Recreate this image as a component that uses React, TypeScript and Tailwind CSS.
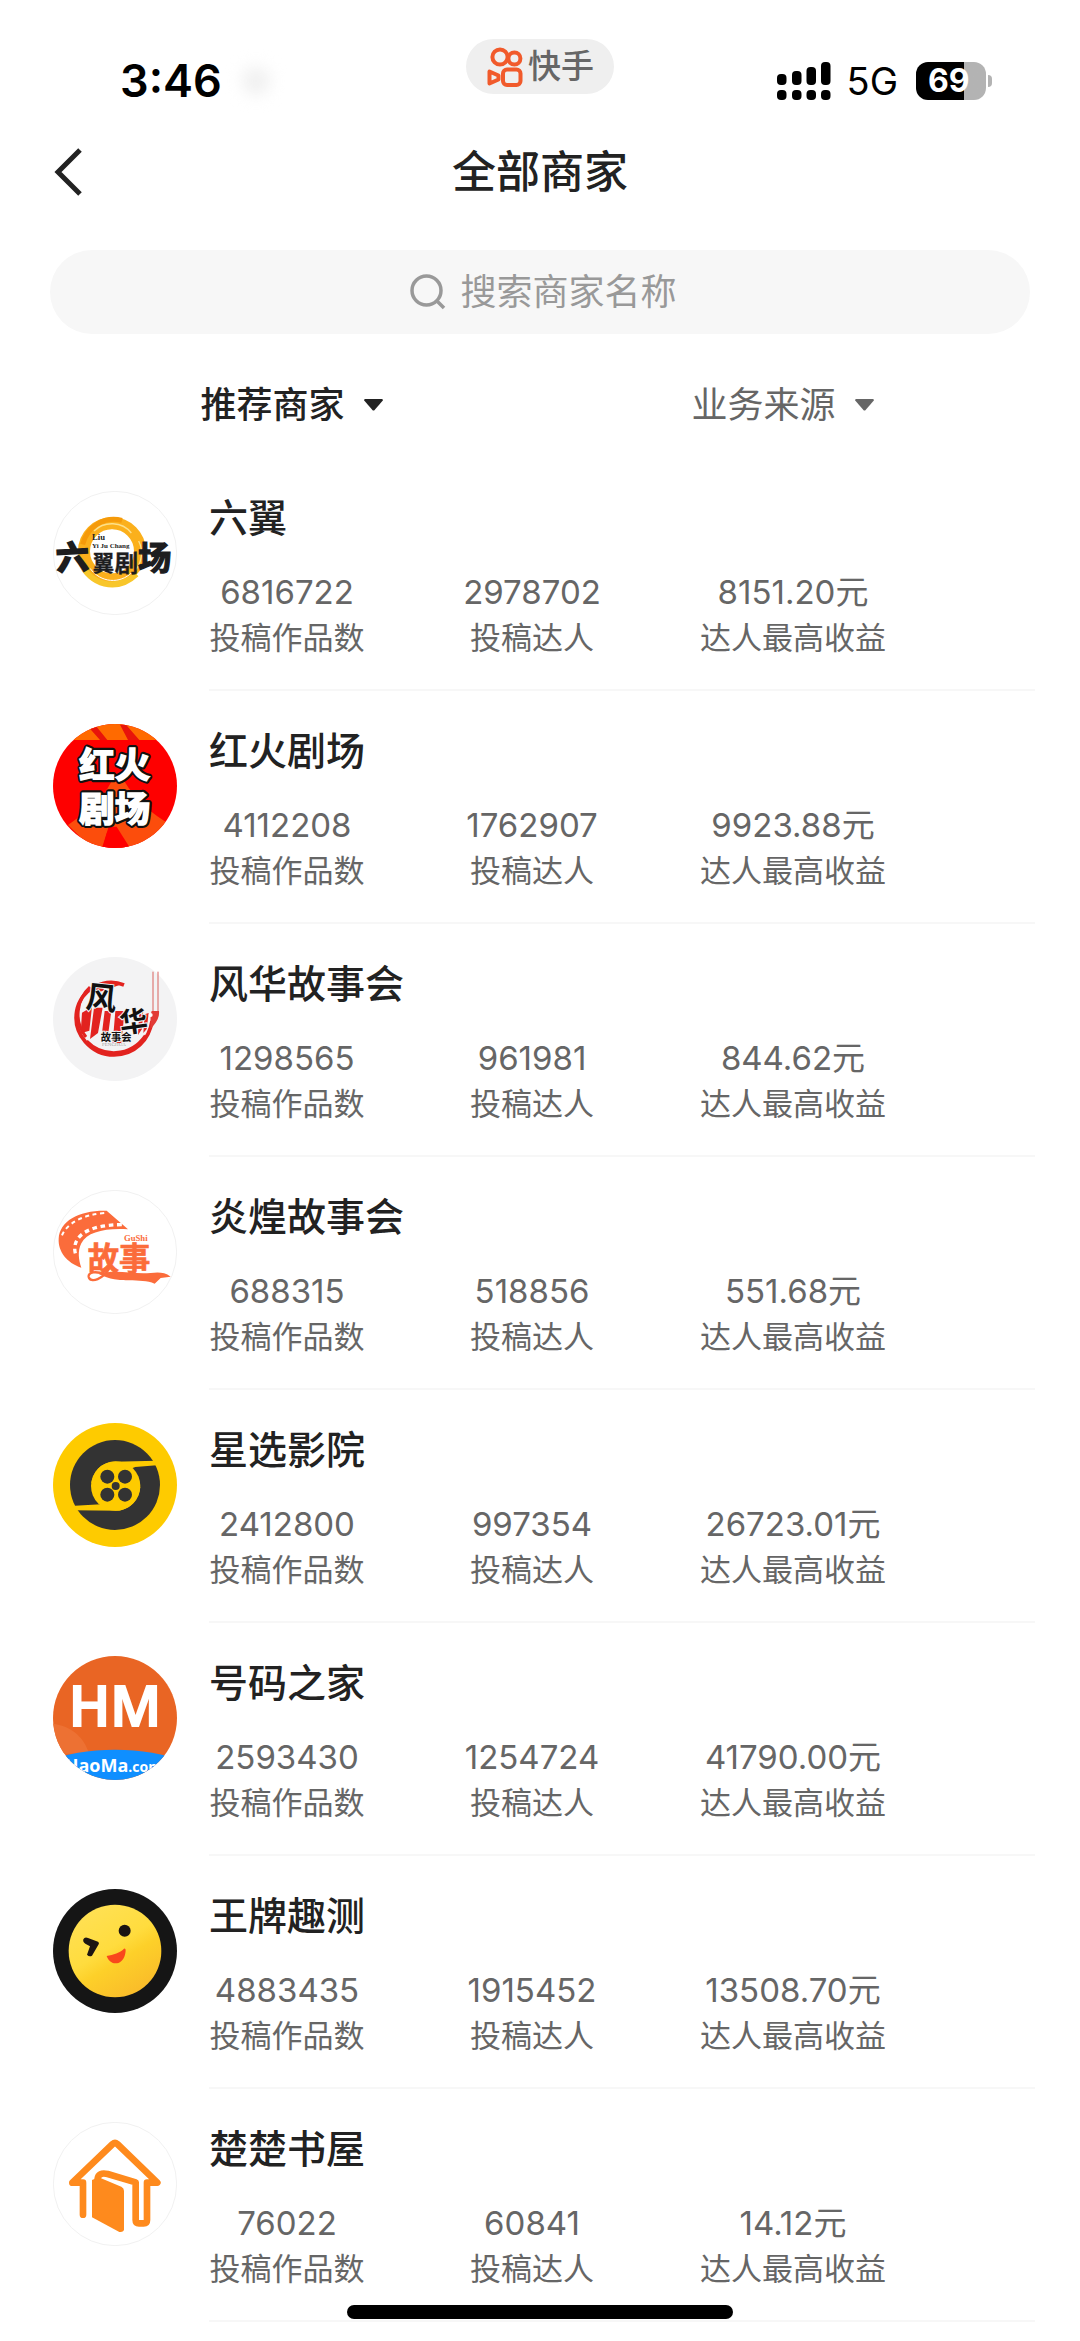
import type { ReactNode } from 'react'

interface Merchant {
  name: string
  works: string
  creators: string
  income: string
  logo: ReactNode
}

const CJK = "Inter, 'Noto Sans CJK SC', sans-serif"

function LiuYiLogo() {
  return (
    <svg viewBox="39 30 372 372" className="size-full" fontFamily={CJK}>
      <circle cx="225" cy="216" r="185" fill="#fff" stroke="#f1f1f1" strokeWidth="3" />
      <circle cx="216" cy="211" r="84" fill="none" stroke="#fbb01c" strokeWidth="36" />
      <path d="M128 190c14-54 66-86 118-72" fill="none" stroke="#f59a0a" strokeWidth="15" />
      <path d="M124 245c24 66 106 90 165 34" fill="none" stroke="#f8c62a" strokeWidth="18" />
      <path d="M150 262c32 44 90 48 126 12" fill="none" stroke="#fff" strokeWidth="3" />
      <path d="M162 150c30-30 84-30 112 6M296 180c16 32 8 66-10 88" fill="none" stroke="#fde08a" strokeWidth="4" />
      <circle cx="216" cy="206" r="60" fill="#fff" />
      <g fontFamily="'Liberation Serif', serif" fontWeight="700" fill="#222">
        <text x="156" y="178" fontSize="26">Liu</text>
        <text x="156" y="202" fontSize="21">Yi Ju Chang</text>
      </g>
      <g fontWeight="700" fill="#1d1d1f" stroke="#1d1d1f">
        <text x="48" y="265" fontSize="98" strokeWidth="6" transform="rotate(-3 90 230)">六</text>
        <text x="158" y="271" fontSize="64" strokeWidth="1">翼</text>
        <text x="224" y="273" fontSize="70" strokeWidth="1">剧</text>
        <text x="294" y="268" fontSize="100" strokeWidth="4">场</text>
      </g>
    </svg>
  )
}

function HongHuoLogo() {
  return (
    <svg viewBox="39 42 372 372" className="size-full" fontFamily={CJK}>
      <clipPath id="honghuo">
        <circle cx="225" cy="228" r="186" />
      </clipPath>
      <g clipPath="url(#honghuo)">
        <path fill="#fe0000" d="M39 42h372v372H39z" />
        <path fill="#ff6a00" d="M39 42h372v48H39z" />
        <path fill="#e8140a" d="M168 48l34 42h-22l-30-34zM258 44l40 46h-34l-24-46z" />
        <path fill="#fc4d0c" d="M214 215c-30 60-76 90-130 130l70 69h34l14-50 22 50h70l100-70c-60-30-110-80-140-129z" />
        <path fill="#fe0000" d="M206 350l-20 64h84l-40-64z" />
      </g>
      <g fontSize="106" fontWeight="700" fill="#fff" stroke="#111" strokeWidth="18" strokeLinejoin="round" paintOrder="stroke">
        <text x="118" y="203">红火</text>
        <text x="118" y="337">剧场</text>
      </g>
      <g fontSize="106" fontWeight="700" fill="#fff" stroke="#fff" strokeWidth="5">
        <text x="118" y="203">红火</text>
        <text x="118" y="337">剧场</text>
      </g>
    </svg>
  )
}

function FengHuaLogo() {
  return (
    <svg viewBox="39 38 372 372" className="size-full" fontFamily={CJK}>
      <circle cx="225" cy="224" r="186" fill="#f3f3f4" />
      <path d="M252 122c-60-24-130 14-142 78-12 70 44 132 112 132 62 0 106-46 114-102" fill="none" stroke="#e2231f" strokeWidth="11" />
      <path d="M150 128c-40 36-50 104-12 150M140 290c46 48 130 50 176-16" fill="none" stroke="#e2231f" strokeWidth="9" />
      <path fill="#e2231f" d="M150 128l80-16 20 6-70 24zM126 205l30-18-8 72-26 8zM162 190h26l-14 76-24 18zM194 200h20l-12 88-18-6zM226 200h28l-10 96h-26zM298 200l12-6-4 60-12 18zM314 210l12-4-6 48-10 12z" />
      <path d="M339 82v118M354 82v118" fill="none" stroke="#d9625f" strokeWidth="3" />
      <path fill="#e23b36" d="M335 200h22c2 20-8 36-26 54 2-20-2-34 4-54z" />
      <circle cx="332" cy="212" r="6" fill="#fff" />
      <g fontWeight="700" fill="#111" stroke="#f3f3f4" strokeWidth="6" paintOrder="stroke">
        <text x="138" y="194" fontSize="92" transform="rotate(6 180 160)">风</text>
        <text x="238" y="262" fontSize="84" transform="rotate(-8 280 230)">华</text>
        <text x="182" y="290" fontSize="31">故事会</text>
      </g>
      <text x="186" y="306" fontSize="15" fill="#999" fontFamily="'Liberation Serif', serif">FENGHUA</text>
    </svg>
  )
}

function GuShiLogo() {
  return (
    <svg viewBox="39 34 372 372" className="size-full" fontFamily={CJK}>
      <circle cx="225" cy="220" r="185" fill="#fff" stroke="#f1f1f1" strokeWidth="3" />
      <path
        fill="#fb6c3b"
        d="M124 267C80 252 54 218 56 180c3-54 62-86 144-84l64 56c-70-4-122 8-140 42-12 24-8 50 0 73z"
      />
      <path d="M66 170c14-34 60-62 128-67" fill="none" stroke="#fff" strokeWidth="6" strokeDasharray="12 11" />
      <path d="M106 224c-12-50 36-86 140-86" fill="none" stroke="#fff" strokeWidth="10" strokeDasharray="14 11" />
      <text x="252" y="187" fontSize="26" fontWeight="700" fill="#fb6c3b" fontFamily="'Liberation Serif', serif">GuShi</text>
      <text x="143" y="274" fontSize="94" fontWeight="700" fill="#fb6c3b" stroke="#fb6c3b" strokeWidth="2">
        故事
      </text>
      <path d="M212 262c-20 40-62 54-66 32-2-14 22-18 50-6" fill="none" stroke="#fb6c3b" strokeWidth="7" />
      <path fill="#fb6c3b" d="M176 286c46-14 90-2 134-2 30 0 56-10 82 10l-30 4-18 17c-44-20-104 4-168-29z" />
    </svg>
  )
}

function XingXuanLogo() {
  return (
    <svg viewBox="39 42 372 372" className="size-full">
      <circle cx="225" cy="228" r="186" fill="#fecb00" />
      <circle cx="225" cy="228" r="135" fill="#333" />
      <circle cx="227" cy="231" r="74" fill="#fecb00" />
      <path fill="#fecb00" d="M350 155l-130 3c-40 4-60 30-66 64l50 40 60-80 22-8 64-5zM100 304l138 1c36-6 58-34 63-70l-50-40-50 70-18 21-78 4z" />
      <g fill="#333">
        <circle cx="202" cy="203" r="21" />
        <circle cx="255" cy="203" r="21" />
        <circle cx="202" cy="257" r="21" />
        <circle cx="255" cy="257" r="21" />
        <circle cx="227" cy="231" r="12" />
      </g>
    </svg>
  )
}

function HaoMaLogo() {
  return (
    <svg viewBox="39 37 372 372" className="size-full">
      <clipPath id="haoma">
        <circle cx="225" cy="223" r="186" />
      </clipPath>
      <g clipPath="url(#haoma)">
        <path fill="#e96524" d="M39 37h372v372H39z" />
        <path fill="#ed7133" d="M39 240c50 6 92 36 108 90H39z" />
        <path fill="#e55b28" d="M290 37c60 30 100 80 121 150V37z" />
        <ellipse cx="225" cy="440" rx="290" ry="122" fill="#0f8fff" />
        <g fill="#fff" fontFamily="'Open Sans', sans-serif">
          <text x="74" y="386" fontSize="54" fontWeight="700">HaoMa<tspan fontSize="42">.com</tspan></text>
          <text x="225" y="247" fontSize="166" fontWeight="600" stroke="#fff" strokeWidth="6" textAnchor="middle">HM</text>
        </g>
      </g>
    </svg>
  )
}

function WangPaiLogo() {
  return (
    <svg viewBox="39 39 372 372" className="size-full">
      <linearGradient id="face" x1="0.2" y1="0" x2="0.8" y2="1">
        <stop offset="0" stopColor="#ffe156" />
        <stop offset="0.45" stopColor="#ffdc3e" />
        <stop offset="0.6" stopColor="#fdd029" />
        <stop offset="1" stopColor="#f9b82a" />
      </linearGradient>
      <circle cx="225" cy="225" r="186" fill="#151515" />
      <circle cx="225" cy="225" r="139" fill="url(#face)" />
      <circle cx="254" cy="164" r="18" fill="#1b1412" />
      <path fill="#1b1412" d="M130 190q4-8 14-4l30 11q5 3 2 8l-20 34q-8 5-15-3l9-25-14-8q-8-4-6-13z" />
      <path fill="#f9481c" d="M200 240c20-4 40-10 52-22 6-2 6 8 3 18-8 32-44 36-55 4z" />
    </svg>
  )
}

function ChuChuLogo() {
  return (
    <svg viewBox="39 42 372 372" className="size-full">
      <circle cx="225" cy="228" r="185" fill="#fff" stroke="#f1f1f1" strokeWidth="3" />
      <g fill="none" stroke="#fe8a1d" strokeWidth="20" strokeLinecap="round" strokeLinejoin="round">
        <path d="M129 320v-96H97L218 108q7-6 14 0l120 116h-31v112q0 10-10 10h-14q-10 0-10-10V223l-84-25q-28-6-30 14v110" />
      </g>
      <path fill="#fe8a1d" d="M156 216l20-8 68 28q8 4 8 12v116q-1 10-14 8l-82-44z" />
    </svg>
  )
}

const MERCHANTS: Merchant[] = [
  { name: '六翼', works: '6816722', creators: '2978702', income: '8151.20元', logo: <LiuYiLogo /> },
  { name: '红火剧场', works: '4112208', creators: '1762907', income: '9923.88元', logo: <HongHuoLogo /> },
  { name: '风华故事会', works: '1298565', creators: '961981', income: '844.62元', logo: <FengHuaLogo /> },
  { name: '炎煌故事会', works: '688315', creators: '518856', income: '551.68元', logo: <GuShiLogo /> },
  { name: '星选影院', works: '2412800', creators: '997354', income: '26723.01元', logo: <XingXuanLogo /> },
  { name: '号码之家', works: '2593430', creators: '1254724', income: '41790.00元', logo: <HaoMaLogo /> },
  { name: '王牌趣测', works: '4883435', creators: '1915452', income: '13508.70元', logo: <WangPaiLogo /> },
  { name: '楚楚书屋', works: '76022', creators: '60841', income: '14.12元', logo: <ChuChuLogo /> },
]

function StatusBar() {
  return (
    <div className="grid h-32 grid-cols-[1fr_auto_1fr] items-start pt-[39px] text-black">
      <div className="mt-[14px] flex items-center gap-5 pl-[120px]">
        <span className="text-[45px] leading-[56px] font-semibold">3:46</span>
        <span className="size-7 rounded-full bg-[#f0f0f0] blur-sm" />
      </div>
      <div className="flex h-[55px] w-[148px] items-center justify-center gap-1 rounded-full bg-[#efefef]">
        <svg viewBox="486 44 38 42" className="h-[42px] w-[38px]" fill="none" stroke="#f15a2b" strokeWidth="4" strokeLinejoin="round">
          <circle cx="500" cy="55" r="7.6" />
          <circle cx="514.4" cy="56.5" r="6" />
          <rect x="503" y="67.5" width="17.5" height="15.5" rx="4" />
          <path d="M489.500 69.500v12l9-4v-4z" />
        </svg>
        <span className="text-[33px] leading-[55px] font-medium text-[#666]">快手</span>
      </div>
      <div className="mt-[14px] flex h-14 items-center justify-end pr-[88px]">
        <svg viewBox="0 0 54 38" className="h-[38px] w-[54px]">
          <rect x="0" y="12" width="9.500" height="11" rx="4" />
          <rect x="15" y="9" width="9.500" height="14" rx="4" />
          <rect x="29.500" y="5" width="9.500" height="18" rx="4" />
          <rect x="44" y="0" width="9.500" height="23" rx="4" />
          <rect x="0" y="28" width="9.500" height="10" rx="4" />
          <rect x="15" y="28" width="9.500" height="10" rx="4" />
          <rect x="29.500" y="28" width="9.500" height="10" rx="4" />
          <rect x="44" y="28" width="9.500" height="10" rx="4" />
        </svg>
        <span className="mr-[18px] ml-4 text-[38px] leading-[56px]">5G</span>
        <span className="flex h-[38px] w-[70px] items-center rounded-xl bg-linear-to-r from-black from-69% to-[#b3b3b3] to-69% pl-3 text-[32px] leading-[38px] font-bold text-white">
          69
        </span>
        <span className="ml-0.5 h-3 w-1 rounded-r-full bg-[#b3b3b3]" />
      </div>
    </div>
  )
}

function Filter({ label, active }: { label: string; active?: boolean }) {
  return (
    <label className={`flex items-center justify-center gap-[18px] ${active ? 'text-[#222] font-medium' : 'text-[#666]'}`}>
      <select aria-label={label} className="appearance-none bg-transparent text-[36px] leading-[52px] outline-none">
        <option>{label}</option>
      </select>
      <svg viewBox="0 0 19 12" className="pointer-events-none h-3 w-[19px]" fill="currentColor">
        <path d="M1 0h17q1.500.5.6 1.800L10.600 11q-1.100 1.200-2.200 0L.4 1.800Q-.5.5 1 0z" />
      </svg>
    </label>
  )
}

function Stat({ value, label }: { value: string; label: string }) {
  return (
    <div className="flex flex-col-reverse text-center whitespace-nowrap text-[#666]">
      <dt className="text-[31px] leading-[46px]">{label}</dt>
      <dd className="text-[33px] leading-[46px]">{value}</dd>
    </div>
  )
}

export default function App() {
  return (
    <div className="min-h-screen bg-white font-[Inter,'Noto_Sans_CJK_SC',sans-serif] text-[#222]">
      <StatusBar />

      <header className="grid h-[88px] grid-cols-[1fr_auto_1fr] items-center px-[50px]">
        <button aria-label="返回" className="flex h-16 w-12 items-center">
          <svg viewBox="0 0 36 52" className="h-[52px] w-9" fill="none" stroke="#222" strokeWidth="5">
            <path d="M30 4L8 26l22 22" />
          </svg>
        </button>
        <h1 className="text-[44px] leading-[60px] font-medium">全部商家</h1>
      </header>

      <label className="mx-[50px] mt-[34px] flex h-[84px] items-center justify-center gap-[15px] rounded-full bg-[#f7f7f7] pl-2">
        <svg viewBox="0 0 36 36" className="size-9" fill="none" stroke="#999" strokeWidth="3.500">
          <circle cx="16.500" cy="16.500" r="14.500" />
          <path d="M27 27l7 7" />
        </svg>
        <input
          type="text"
          aria-label="搜索商家名称"
          placeholder="搜索商家名称"
          className="w-[218px] bg-transparent text-[36px] leading-[52px] outline-none placeholder:text-[#999]"
        />
      </label>

      <div className="grid h-[124px] grid-cols-2 pt-[18px] pr-[52px] pl-[46px]">
        <Filter label="推荐商家" active />
        <Filter label="业务来源" />
      </div>

      <ul>
        {MERCHANTS.map((m) => (
          <li key={m.name} className="flex gap-8 pr-[45px] pl-[53px]">
            <div className="mt-[33px] size-[124px] shrink-0">{m.logo}</div>
            <div className="flex-1 border-b-2 border-[#f7f7f7] pt-[33px] pb-7">
              <h2 className="text-[39px] leading-[54px] font-medium">{m.name}</h2>
              <dl className="mt-6 grid grid-cols-[156px_138px_188px] gap-[98px]">
                <Stat value={m.works} label="投稿作品数" />
                <Stat value={m.creators} label="投稿达人" />
                <Stat value={m.income} label="达人最高收益" />
              </dl>
            </div>
          </li>
        ))}
      </ul>

      {/* Home indicator */}
      <div className="fixed inset-x-0 bottom-[22px] flex justify-center">
        <div className="h-[14px] w-[386px] rounded-full bg-black" />
      </div>
    </div>
  )
}
